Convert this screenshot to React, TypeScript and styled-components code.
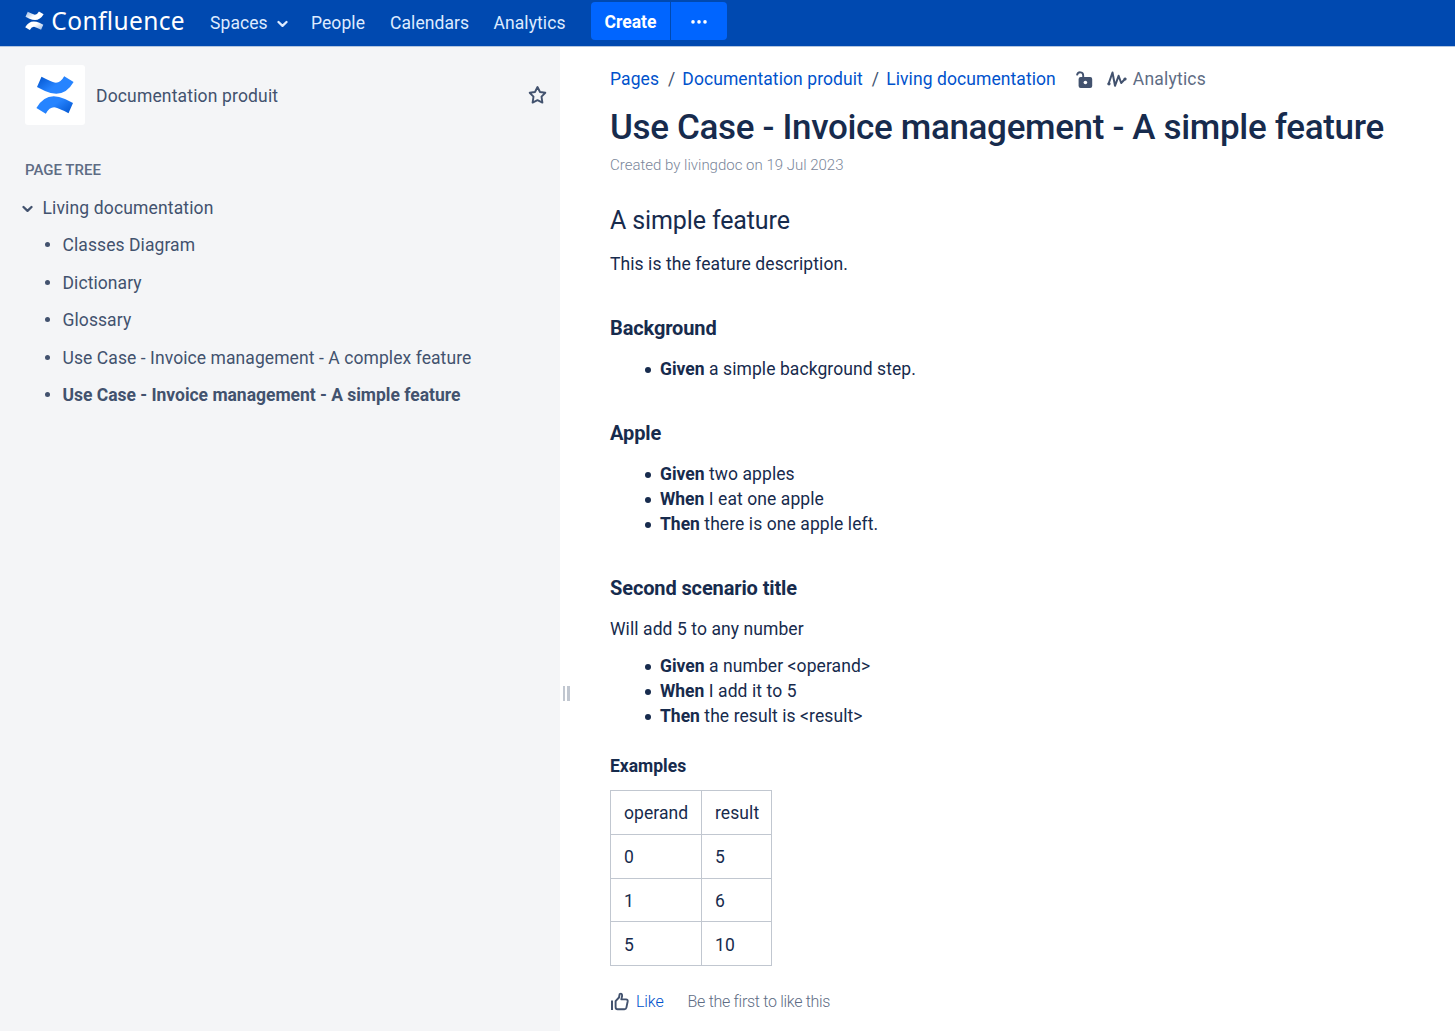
import React from "react";
import styled, { createGlobalStyle } from "styled-components";

const Global = createGlobalStyle`
  *, *::before, *::after { box-sizing: border-box; }
  body { margin: 0; background: #fff; }
`;

const Page = styled.div`
  width: 100%;
  height: 1031px;
  overflow: hidden;
  display: flex;
  flex-direction: column;
  font-family: Roboto, "Noto Sans", sans-serif;
  font-size: 17.5px;
  line-height: 25px;
  letter-spacing: 0.08px;
  color: #172b4d;
`;

const Header = styled.header`
  flex: none;
  height: 47px;
  padding-left: 25px;
  display: flex;
  align-items: flex-start;
  background: #0049b0;
  border-bottom: 1px solid #b3c6e0;
  color: #deebff;
`;

const Brand = styled.a`
  width: 160px;
  height: 41px;
  display: flex;
  align-items: center;
  gap: 7.5px;
  color: #fff;
`;

const BrandName = styled.span`
  font-family: "Noto Sans", sans-serif;
  font-size: 24.5px;
  line-height: 41px;
  letter-spacing: 0.38px;
`;

const Nav = styled.nav`
  display: flex;
  gap: 23px;
  padding: 11px 24px 0 25px;
`;

const NavItem = styled.a<{ $width: number }>`
  width: ${(p) => p.$width}px;
  height: 25px;
  display: flex;
  align-items: center;
  justify-content: space-between;
  white-space: nowrap;
`;

const Actions = styled.div`
  display: flex;
  gap: 1px;
  margin-top: 2px;
`;

const ActionButton = styled.button<{ $width: number; $radius: string }>`
  width: ${(p) => p.$width}px;
  height: 38px;
  padding: 3px 0 0;
  border: 0;
  border-radius: ${(p) => p.$radius};
  background: #0065ff;
  color: #fff;
  font: 700 17.5px/35px Roboto, sans-serif;
  display: flex;
  align-items: center;
  justify-content: center;
`;

const Body = styled.div`
  flex: 1;
  min-height: 0;
  display: flex;
`;

const Sidebar = styled.aside`
  width: 560px;
  padding: 18px 13px 0 25px;
  background: #f4f5f7;
  color: #42526e;
`;

const SpaceRow = styled.div`
  display: flex;
  align-items: center;
  height: 60px;
`;

const SpaceLogo = styled.div`
  width: 60px;
  height: 60px;
  border-radius: 3px;
  background: #fff;
  display: flex;
  align-items: center;
  justify-content: center;
`;

const SpaceName = styled.span`
  flex: 1;
  padding: 2px 0 0 11px;
  letter-spacing: 0.16px;
`;

const TreeTitle = styled.h2`
  margin: 33px 0 13px;
  font-size: 15px;
  line-height: 25px;
  font-weight: 500;
  letter-spacing: 0;
  color: #5e6c84;
`;

const TreeRoot = styled.div`
  display: flex;
  align-items: center;
  gap: 9.5px;
  height: 25px;
  margin-left: -3px;
  letter-spacing: 0.15px;
`;

const TreeList = styled.ul`
  list-style: none;
  margin: 12px 0 0;
  padding: 0 0 0 20px;
  display: grid;
  row-gap: 12.5px;
`;

const TreeItem = styled.li<{ $current?: boolean }>`
  height: 25px;
  display: flex;
  align-items: center;
  gap: 12.5px;
  font-weight: ${(p) => (p.$current ? 700 : 400)};
  letter-spacing: ${(p) => (p.$current ? "-0.02px" : "0.08px")};

  &::before {
    content: "";
    width: 5px;
    height: 5px;
    margin-bottom: 2px;
    border-radius: 50%;
    background: #42526e;
  }
`;

const Splitter = styled.div`
  width: 10px;
  display: flex;
  gap: 2px;
  padding: 639px 0 0 2.5px;
`;

const GripBar = styled.span`
  width: 2.5px;
  height: 15px;
  background: #c1c7d0;
`;

const Main = styled.main`
  flex: 1;
  padding: 20px 0 0 40px;
`;

const Crumbs = styled.div`
  height: 25px;
  display: flex;
  align-items: center;
`;

const Crumb = styled.a`
  color: #0052cc;

  & + &::before {
    content: "/";
    padding: 0 7px 0 9px;
    color: #42526e;
  }
`;

const CrumbMeta = styled.span<{ $before: number }>`
  display: flex;
  align-items: center;
  gap: 6px;
  margin-left: ${(p) => p.$before}px;
  letter-spacing: 0.2px;
  color: #5e6c84;
`;

const Title = styled.h1`
  margin: 16px 0 0;
  font-size: 35px;
  line-height: 40px;
  font-weight: 500;
  letter-spacing: -0.335px;
  white-space: nowrap;
`;

const Byline = styled.p`
  margin: 5px 0 0;
  font-size: 15px;
  line-height: 25px;
  font-weight: 300;
  letter-spacing: 0;
  color: #7a869a;
`;

const Feature = styled.h2`
  margin: 27px 0 0;
  font-size: 25px;
  line-height: 31px;
  font-weight: 400;
  letter-spacing: -0.12px;
`;

const Paragraph = styled.p<{ $top: number }>`
  margin: ${(p) => p.$top}px 0 0;
`;

const Scenario = styled.h3`
  margin: 39px 0 0;
  font-size: 20px;
  line-height: 25px;
  font-weight: 700;
  letter-spacing: -0.12px;
`;

const Steps = styled.ul<{ $top: number }>`
  list-style: none;
  margin: ${(p) => p.$top}px 0 0;
  padding: 0 0 0 35px;
`;

const Step = styled.li`
  height: 25px;
  display: flex;
  align-items: center;

  &::before {
    content: "";
    width: 6px;
    height: 6px;
    margin: 1px 9px 0 0;
    border-radius: 50%;
    background: #172b4d;
  }
`;

const Keyword = styled.strong`
  font-weight: 700;
  letter-spacing: 0;
`;

const ExamplesTitle = styled.h4`
  margin: 25px 0 11px;
  font-size: 17.5px;
  line-height: 25px;
  font-weight: 700;
  letter-spacing: 0;
`;

const Table = styled.table`
  width: 162px;
  border-collapse: collapse;
  table-layout: fixed;
`;

const Cell = styled.td<{ $width: number }>`
  width: ${(p) => p.$width}px;
  height: 43.75px;
  padding: 3px 0 0 13px;
  border: 1px solid #c1c7d0;
`;

const LikeRow = styled.div`
  display: flex;
  align-items: center;
  height: 25px;
  margin-top: 23px;
  font-size: 16px;
  font-weight: 300;
  letter-spacing: -0.3px;
  color: #5e6c84;
`;

const LikeLink = styled.a`
  margin: 0 24px 0 7px;
  letter-spacing: -0.1px;
  color: #0052cc;
`;

const BAND = "M5.5 0.8 L1 11 L9 14.9 Q27.5 23.5 37.6 6 L28.2 0.2 Q24.2 7.6 18.5 6.5 Q14.5 5.4 5.5 0.8Z";

function Mark({ size, from, to, id }: { size: number; from: string; to: string; id: string }) {
  return (
    <svg width={size} height={size} viewBox="0 0 38 38">
      <defs>
        <linearGradient id={id} x1="0" y1="0" x2="0.6" y2="0.4">
          <stop offset="0" stopColor={from} />
          <stop offset="1" stopColor={to} />
        </linearGradient>
      </defs>
      <path d={BAND} fill={`url(#${id})`} />
      <path d={BAND} fill={`url(#${id})`} transform="rotate(180 19 19)" />
    </svg>
  );
}

function Chevron({ color }: { color: string }) {
  return (
    <svg width="11" height="8" viewBox="0 0 11 8">
      <path d="M1.5 2 L5.5 5.8 L9.5 2" fill="none" stroke={color} strokeWidth="2.3" strokeLinecap="round" strokeLinejoin="round" />
    </svg>
  );
}

function Dots() {
  return (
    <svg width="18" height="6" viewBox="0 0 18 6">
      <circle cx="3" cy="1.9" r="1.8" fill="#fff" />
      <circle cx="9" cy="1.9" r="1.8" fill="#fff" />
      <circle cx="15" cy="1.9" r="1.8" fill="#fff" />
    </svg>
  );
}

function Star() {
  return (
    <svg width="19" height="20" viewBox="0 0 19 20">
      <path d="M9.5 2 L12 7 L17.3 7.8 L13.5 11.7 L14.4 17.6 L9.5 15.2 L4.6 17.6 L5.5 11.7 L1.7 7.8 L7 7Z" fill="none" stroke="#42526e" strokeWidth="1.9" strokeLinejoin="round" />
    </svg>
  );
}

function Unlock() {
  return (
    <svg width="17" height="18" viewBox="0 0 17 18">
      <path d="M1 4.4 C1.6 0.2 7.2 0.4 7.2 4.4 V7" fill="none" stroke="#42526e" strokeWidth="1.9" />
      <rect x="2.6" y="6" width="13.6" height="11" rx="2" fill="#42526e" />
      <circle cx="9.4" cy="11.5" r="1.8" fill="#fff" />
    </svg>
  );
}

function Pulse() {
  return (
    <svg width="20" height="18" viewBox="0 0 20 18">
      <path d="M1.5 13 L5.5 1.5 L8 14.8 L11.6 4.8 L14.2 12 L18.3 7.8" fill="none" stroke="#42526e" strokeWidth="2" strokeLinecap="round" strokeLinejoin="round" />
      <circle cx="2" cy="12.8" r="1.6" fill="#42526e" />
      <circle cx="18" cy="8" r="1.6" fill="#42526e" />
    </svg>
  );
}

function Thumb() {
  return (
    <svg width="19" height="19" viewBox="0 0 19 19">
      <path d="M2 8.5 V18" stroke="#42526e" strokeWidth="2" />
      <path d="M5.6 9.2 L9 5.5 L9.7 2 Q12.3 0.8 12.1 4 L11.3 7.4 H16 Q17.9 7.6 17.7 9.2 L16.4 15.6 Q16 17.3 14.4 17.3 H7.6 Q5.6 17.3 5.6 15Z" fill="none" stroke="#42526e" strokeWidth="1.9" strokeLinejoin="round" />
    </svg>
  );
}

const pages = ["Classes Diagram", "Dictionary", "Glossary", "Use Case - Invoice management - A complex feature"];
const rows = [["operand", "result"], ["0", "5"], ["1", "6"], ["5", "10"]];

function StepList({ top, steps }: { top: number; steps: [string, string][] }) {
  return (
    <Steps $top={top}>
      {steps.map(([keyword, text]) => (
        <Step key={keyword}>
          <span>
            <Keyword>{keyword}</Keyword> {text}
          </span>
        </Step>
      ))}
    </Steps>
  );
}

export default function App() {
  return (
    <Page>
      <Global />
      <Header>
        <Brand>
          <Mark size={19.5} from="#8fb2e2" to="#ffffff" id="brand" />
          <BrandName>Confluence</BrandName>
        </Brand>
        <Nav>
          <NavItem $width={78}>Spaces <Chevron color="#deebff" /></NavItem>
          <NavItem $width={56}>People</NavItem>
          <NavItem $width={80.5}>Calendars</NavItem>
          <NavItem $width={73.5}>Analytics</NavItem>
        </Nav>
        <Actions>
          <ActionButton $width={79} $radius="4px 0 0 4px">Create</ActionButton>
          <ActionButton $width={56} $radius="0 4px 4px 0"><Dots /></ActionButton>
        </Actions>
      </Header>
      <Body>
        <Sidebar>
          <SpaceRow>
            <SpaceLogo><Mark size={38} from="#0052cc" to="#2684ff" id="space" /></SpaceLogo>
            <SpaceName>Documentation produit</SpaceName>
            <Star />
          </SpaceRow>
          <TreeTitle>PAGE TREE</TreeTitle>
          <TreeRoot><Chevron color="#42526e" />Living documentation</TreeRoot>
          <TreeList>
            {pages.map((page) => <TreeItem key={page}>{page}</TreeItem>)}
            <TreeItem $current>Use Case - Invoice management - A simple feature</TreeItem>
          </TreeList>
        </Sidebar>
        <Splitter><GripBar /><GripBar /></Splitter>
        <Main>
          <Crumbs>
            <Crumb>Pages</Crumb>
            <Crumb>Documentation produit</Crumb>
            <Crumb>Living documentation</Crumb>
            <CrumbMeta $before={20}><Unlock /></CrumbMeta>
            <CrumbMeta $before={14}><Pulse />Analytics</CrumbMeta>
          </Crumbs>
          <Title>Use Case - Invoice management - A simple feature</Title>
          <Byline>Created by livingdoc on 19 Jul 2023</Byline>
          <Feature>A simple feature</Feature>
          <Paragraph $top={16}>This is the feature description.</Paragraph>
          <Scenario>Background</Scenario>
          <StepList top={16} steps={[["Given", "a simple background step."]]} />
          <Scenario>Apple</Scenario>
          <StepList top={16} steps={[["Given", "two apples"], ["When", "I eat one apple"], ["Then", "there is one apple left."]]} />
          <Scenario>Second scenario title</Scenario>
          <Paragraph $top={16}>Will add 5 to any number</Paragraph>
          <StepList top={12} steps={[["Given", "a number <operand>"], ["When", "I add it to 5"], ["Then", "the result is <result>"]]} />
          <ExamplesTitle>Examples</ExamplesTitle>
          <Table>
            <tbody>
              {rows.map(([operand, result]) => (
                <tr key={operand}>
                  <Cell $width={91}>{operand}</Cell>
                  <Cell $width={70}>{result}</Cell>
                </tr>
              ))}
            </tbody>
          </Table>
          <LikeRow>
            <Thumb />
            <LikeLink>Like</LikeLink>
            Be the first to like this
          </LikeRow>
        </Main>
      </Body>
    </Page>
  );
}
